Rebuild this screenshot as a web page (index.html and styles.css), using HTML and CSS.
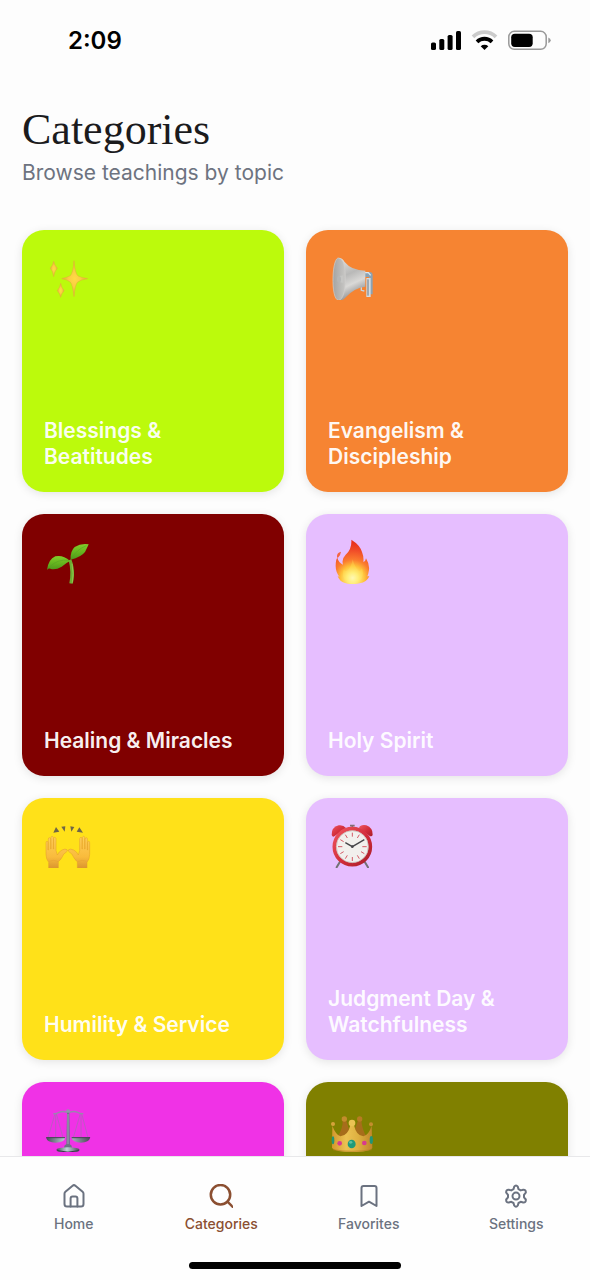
FILE: index.html
```html
<!DOCTYPE html>
<html lang="en">
<head>
<meta charset="utf-8">
<meta name="viewport" content="width=device-width, initial-scale=1">
<title>Categories</title>
<link rel="stylesheet" href="styles.css">
</head>
<body>
<div class="app">
  <div class="status">
    <span class="time">2:09</span>
    <svg class="status-icons" viewBox="0 0 120 22" aria-hidden="true">
      <rect x="0" y="12.500" width="5" height="7.500" rx="1.600"/>
      <rect x="8.300" y="9" width="5" height="11" rx="1.600"/>
      <rect x="16.600" y="5" width="5" height="15" rx="1.600"/>
      <rect x="25" y="1" width="5" height="19" rx="1.600"/>
      <path d="M42 6.800a16.500 16.500 0 0 1 23 0" fill="none" stroke="#cbcbcb" stroke-width="3.800"/>
      <path d="M46 11.800a10.800 10.800 0 0 1 15 0" fill="none" stroke="#000" stroke-width="3.800"/>
      <path d="M49.700 16.200a5.600 5.600 0 0 1 7.600 0L53.500 20z"/>
      <rect x="77.800" y="1.300" width="37.400" height="18" rx="5.500" fill="none" stroke="#999" stroke-width="1.500"/>
      <rect x="80.200" y="3.700" width="21.500" height="13.200" rx="3.600"/>
      <path d="M117.300 7.400q2.400.8 2.400 2.900t-2.400 2.900z" fill="#999"/>
    </svg>
  </div>

  <main class="content">
    <header class="head">
      <h1>Categories</h1>
      <p>Browse teachings by topic</p>
    </header>

    <div class="grid">
      <button class="card lime">
        <svg viewBox="27 18 144 144" aria-hidden="true">
          <defs><radialGradient id="star"><stop offset="0" stop-color="#ffda45"/><stop offset=".45" stop-color="#fbcd42"/><stop offset="1" stop-color="#dfad36"/></radialGradient></defs>
          <g fill="url(#star)" stroke="#e5ad3b" stroke-width="1.500">
            <path d="M117 44Q120 83 129 90Q138 95 158 98Q136 101 128 108Q120 115 117 152Q113 115 106 108Q98 101 80 98Q98 94 106 89Q114 82 117 44z"/>
            <path d="M56 46Q58 58 67 67Q58 75 56 92Q54 75 46 67Q54 58 56 46z"/>
            <path d="M77 112Q79 126 87 134Q79 142 77 154Q75 142 67 134Q75 126 77 112z"/>
          </g>
        </svg>
        <span>Blessings &amp; Beatitudes</span>
      </button>

      <button class="card orange">
        <svg viewBox="24 18 144 144" aria-hidden="true">
          <defs>
            <linearGradient id="horn" x1="0" y1="0" x2=".3" y2="1"><stop offset="0" stop-color="#e6e5e3"/><stop offset=".45" stop-color="#b9b9b8"/><stop offset=".7" stop-color="#dad9d7"/><stop offset="1" stop-color="#8d8e90"/></linearGradient>
            <linearGradient id="bell"><stop offset="0" stop-color="#a4a4a3"/><stop offset="1" stop-color="#c8c7c5"/></linearGradient>
          </defs>
          <path d="M126 78h22q10 0 10 10v57h-11V93h-21z" fill="#8ba3b4"/>
          <path d="M128 80h17l7 8" fill="none" stroke="#dde7ed" stroke-width="4"/>
          <path d="M139 96h13v57h-13z" fill="#d4dce2"/>
          <path d="M144 100v49" stroke="#657783" stroke-width="3"/>
          <path d="M132 116l-8 3v14l9 2" fill="none" stroke="#c9d4dd" stroke-width="4"/>
          <path d="M56 36Q67 35 74 48Q95 74 136 74V122Q104 125 78 153Q67 167 55 162z" fill="url(#horn)"/>
          <path d="M56 36C71 38 76 63 76 99S69 161 56 163C43 162 38 130 39 94S47 35 56 36z" fill="url(#bell)" stroke="#d0cfcd" stroke-width="2"/>
          <path d="M56 91l14-3v23l-13-3z" fill="#c6c6c4"/>
          <ellipse cx="57" cy="100" rx="6" ry="10" fill="#b5b6b6"/>
        </svg>
        <span>Evangelism &amp; Discipleship</span>
      </button>

      <button class="card maroon">
        <svg viewBox="27 18 144 144" aria-hidden="true">
          <defs><linearGradient id="leaf" x1="0" y1="0" x2="0" y2="1"><stop offset="0" stop-color="#82ce2a"/><stop offset=".55" stop-color="#64b31f"/><stop offset="1" stop-color="#4e951a"/></linearGradient></defs>
          <path d="M101 91L109 88Q118 111 117 137Q116 153 113 161L103 160Q110 126 101 91z" fill="#6bad32"/>
          <path d="M111 101q6 31 1 57" fill="none" stroke="#a5d05b" stroke-width="2"/>
          <path d="M36 120Q40 88 61 79Q84 74 105 93Q93 99 80 110Q61 121 46 116Q40 115 36 120z" fill="url(#leaf)"/>
          <path d="M107 89Q105 64 119 51Q138 39 161 43Q156 54 150 66Q139 81 107 89z" fill="url(#leaf)"/>
          <path d="M42 112Q68 86 102 91M110 85Q124 59 154 47" fill="none" stroke="#559e24" stroke-width="1.500"/>
        </svg>
        <span>Healing &amp; Miracles</span>
      </button>

      <button class="card lilac">
        <svg viewBox="24 18 144 144" aria-hidden="true">
          <defs><radialGradient id="flame" gradientUnits="userSpaceOnUse" cx="98" cy="144" r="105"><stop offset="0" stop-color="#fffbd0"/><stop offset=".16" stop-color="#ffee80"/><stop offset=".34" stop-color="#ffc23a"/><stop offset=".52" stop-color="#fb7c2e"/><stop offset=".8" stop-color="#f04a28"/><stop offset="1" stop-color="#e9321e"/></radialGradient></defs>
          <path d="M94 29Q120 45 126 66Q132 81 130 96Q137 94 138 85Q149 103 147 119Q145 133 142 139L148 139Q140 157 119 160Q96 165 75 159Q58 154 53 138L59 141Q47 127 47 108Q47 89 52 83Q56 98 69 104Q64 87 77 74Q96 58 94 29z" fill="url(#flame)"/>
          <path d="M51 80Q50 68 63 65Q62 74 55 82Q52 86 51 80z" fill="#f46542"/>
          <path d="M98 88Q94 110 84 120Q75 128 72 117Q65 132 72 146Q81 158 100 158Q120 157 126 143Q132 128 126 115Q121 126 116 122Q105 114 98 88z" fill="#fff05f" opacity=".25"/>
        </svg>
        <span>Holy Spirit</span>
      </button>

      <button class="card yellow">
        <svg viewBox="27 15 144 144" aria-hidden="true">
          <defs>
            <linearGradient id="skin" x1="0" y1="0" x2="0" y2="1"><stop offset="0" stop-color="#ffd05a"/><stop offset=".65" stop-color="#f9bb3c"/><stop offset="1" stop-color="#db9630"/></linearGradient>
            <path id="hand" d="M41 159V142Q33 132 33 118V83q0-4 3-4t3 4v22h1V72q0-4 3-4t4 4v30h1V68q0-4 3-4t4 4v34h1V71q0-4 3-4t4 4v36l4 13q4-10 14-15q10-5 15-1q4 4-3 8q-8 4-11 13q-4 9-12 15v19z"/>
          </defs>
          <g fill="url(#skin)" stroke="#e29b2d" stroke-width="1.500">
            <use href="#hand"/>
            <use href="#hand" transform="translate(197) scale(-1 1)"/>
          </g>
          <path d="M43 139q13-7 26 1M128 140q13-8 26-1" fill="none" stroke="#e7a335" stroke-width="2"/>
          <g fill="#6f6648"><path d="M63 36l10 14-18 3z"/><path d="M79 35l12-1-2 16z"/><path d="M106 34l12 2-9 14z"/><path d="M133 37l11 16-19-3z"/></g>
        </svg>
        <span>Humility &amp; Service</span>
      </button>

      <button class="card lilac">
        <svg viewBox="24 15 144 144" aria-hidden="true">
          <defs><linearGradient id="red" x1="0" y1="0" x2="1" y2="1"><stop offset="0" stop-color="#ef5660"/><stop offset=".55" stop-color="#d12c3a"/><stop offset="1" stop-color="#a91e29"/></linearGradient></defs>
          <path d="M60 140l-10 17M134 140l10 17" stroke="#737175" stroke-width="6" stroke-linecap="round"/>
          <path d="M97 30v12M90 32h14M70 44l-6-7M125 43l6-7" stroke="#806e73" stroke-width="5"/>
          <path d="M35 60Q34 37 56 31Q70 29 78 39L43 64Q38 67 35 60z" fill="url(#red)"/>
          <path d="M117 39Q121 28 139 31Q159 39 158 59Q156 67 148 62z" fill="url(#red)"/>
          <circle cx="97" cy="95" r="54" fill="#f2f0ed" stroke="url(#red)" stroke-width="11"/>
          <circle cx="97" cy="95" r="48" fill="none" stroke="#beb6b1" stroke-width="2"/>
          <path d="M97 53v12M97 126v12M54 95h13M127 95h13M76 59l6 10M112 121l6 10M61 74l10 6M123 110l10 6M118 59l-6 10M82 121l-6 10M61 116l10-6" stroke="#d45b67" stroke-width="3"/>
          <path d="M76 83l21 12 36-21" fill="none" stroke="#454548" stroke-width="4"/>
          <circle cx="97" cy="95" r="4" fill="#47464a"/>
        </svg>
        <span>Judgment Day &amp; Watchfulness</span>
      </button>

      <button class="card magenta">
        <svg viewBox="27 27 144 144" aria-hidden="true">
          <defs><linearGradient id="steel"><stop offset="0" stop-color="#454956"/><stop offset=".45" stop-color="#bed4d7"/><stop offset="1" stop-color="#4a4554"/></linearGradient></defs>
          <path d="M60 56L39 128M64 56L84 128M62 56V127M136 56L115 128M140 56L159 128M138 56V127" stroke="#a56bb3" stroke-width="2"/>
          <path d="M55 56q9 1 17-4q12-5 24 0h8q12-5 24 0q8 5 17 4" fill="none" stroke="#9a86ad" stroke-width="4"/>
          <circle cx="99" cy="49" r="6" fill="#9295a9"/>
          <path d="M96 53h7l2 99H94z" fill="#72718a"/><path d="M99 57v93" stroke="#b6bfce" stroke-width="2"/>
          <path d="M33 127h58q-3 16-29 16t-29-16zM109 127h57q-4 16-28 16t-29-16z" fill="url(#steel)"/>
          <path d="M34 128h56M110 128h55" stroke="#454252" stroke-width="3"/>
          <path d="M89 151q10-8 20 0l3 10H86z" fill="#6c7385"/>
          <ellipse cx="99" cy="165" rx="35" ry="8" fill="url(#steel)"/><path d="M67 167q32 9 64 0" fill="none" stroke="#39374a" stroke-width="3"/>
        </svg>
      </button>

      <button class="card olive">
        <svg viewBox="24 27 144 144" aria-hidden="true">
          <defs><linearGradient id="gold"><stop offset="0" stop-color="#d3982d"/><stop offset=".35" stop-color="#ecc252"/><stop offset=".65" stop-color="#deb040"/><stop offset="1" stop-color="#c0862a"/></linearGradient></defs>
          <path d="M52 124Q70 101 68 74h10l15 48zM139 124Q125 101 124 74h-9l-18 48z" fill="#a76d1b"/>
          <circle cx="73" cy="72" r="8" fill="#c38c2c"/><circle cx="119" cy="72" r="8" fill="#b77b23"/>
          <path d="M37 92Q47 119 61 124Q84 123 91 91h11Q109 123 130 124Q147 119 155 92L157 159Q148 171 97 171T36 159z" fill="url(#gold)"/>
          <circle cx="96" cy="84" r="10" fill="#ebc353"/><circle cx="39" cy="87" r="6" fill="#d6a23b"/><circle cx="153" cy="88" r="6" fill="#c48d2d"/>
          <path d="M39 164q57 10 116 0" fill="none" stroke="#b77e23" stroke-width="2"/>
          <ellipse cx="95" cy="147" rx="12" ry="13" fill="#209b7a"/><ellipse cx="92" cy="142" rx="5" ry="4" fill="#5dc19f"/>
          <circle cx="59" cy="145" r="7" fill="#d83a8f"/><circle cx="133" cy="144" r="7" fill="#d83a8f"/>
          <ellipse cx="39" cy="136" rx="4" ry="12" fill="#239474"/><ellipse cx="154" cy="135" rx="5" ry="12" fill="#239474"/>
        </svg>
      </button>
    </div>
  </main>

  <nav class="tabs">
    <a href="#home"><svg viewBox="0 0 24 24" aria-hidden="true"><path d="M2.500 9.800Q2.500 8.600 3.400 7.800L10.600 1.700q1.400-1.100 2.800 0l7.200 6.100q.9.800.9 2V20q0 2.500-2.500 2.500H5Q2.500 22.500 2.500 20z"/><path d="M8.600 22.500v-8q0-2 2-2h2.800q2 0 2 2v8"/></svg><span>Home</span></a>
    <a href="#categories" class="active" aria-current="page"><svg viewBox="0 0 24 24" aria-hidden="true"><circle cx="11.500" cy="10.700" r="9.700"/><path d="M18.500 17.700l5 5"/></svg><span>Categories</span></a>
    <a href="#favorites"><svg viewBox="0 0 24 24" aria-hidden="true"><path d="M4.500 4q0-2 2-2h11q2 0 2 2v18L12 17.700 4.500 22z"/></svg><span>Favorites</span></a>
    <a href="#settings"><svg viewBox="0 0 24 24" aria-hidden="true"><path d="M10.200 2.700Q12 .3 13.800 2.700l.7 2.500 2.200 1.200 2.500-.7q2.900-.2 2.600 3l-1.800 2.200v2.400l1.800 2.200q.3 3.200-2.600 3l-2.500-.7-2.200 1.200-.7 2.500q-1.800 2.400-3.600 0l-.7-2.500-2.200-1.200-2.500.7q-2.900.2-2.600-3L4 13.300v-2.400L2.200 8.700q-.3-3.200 2.600-3l2.500.7 2.200-1.200z"/><circle cx="12" cy="12.100" r="3.500"/></svg><span>Settings</span></a>
    <div class="home-bar"></div>
  </nav>
</div>
</body>
</html>
```
FILE: styles.css
```css
* { box-sizing: border-box; }

body {
  margin: 0;
  background: #fdfdfd;
  font-family: Inter, "Liberation Sans", sans-serif;
}

.app {
  display: flex;
  flex-direction: column;
  height: 100vh;
}

.status {
  display: flex;
  align-items: center;
  justify-content: space-between;
  padding: 25px 39px 23px 68px;
}

.time {
  font-size: 24px;
  line-height: 32px;
  font-weight: 600;
  color: #000;
}

.status-icons { width: 120px; height: 22px; }

.content {
  flex: 1;
  min-height: 0;
  overflow-y: auto;
  scrollbar-width: none;
}

.head { padding: 24px 22px 44px; }

h1 {
  margin: 0;
  font: 400 44px/52px "Liberation Serif", serif;
  color: #1b1b1d;
}

.head p {
  margin: 3px 0 0;
  font-size: 21px;
  line-height: 27px;
  color: #6d7380;
}

.grid {
  display: grid;
  grid-template-columns: 1fr 1fr;
  gap: 22px;
  padding: 0 22px 22px;
}

.card {
  display: flex;
  flex-direction: column;
  justify-content: space-between;
  align-items: flex-start;
  aspect-ratio: 1;
  padding: 22px;
  border: 0;
  border-radius: 22px;
  box-shadow: 0 2px 10px rgba(0, 0, 0, .1);
  color: rgba(255, 255, 255, .95);
  font: 600 21px/26px Inter, "Liberation Sans", sans-serif;
  text-align: left;
}

.card svg { width: 48px; height: 48px; }

.lime { background: #bcfa0c; }
.orange { background: #f68432; }
.maroon { background: #800000; }
.lilac { background: #e6beff; }
.yellow { background: #ffe119; }
.magenta { background: #f032e6; }
.olive { background: #808000; }

.tabs {
  display: grid;
  grid-template-columns: repeat(4, 1fr);
  row-gap: 30px;
  padding: 27px 0 11px;
  border-top: 1px solid #e8e8ea;
  background: #fefefe;
}

.tabs a {
  display: flex;
  flex-direction: column;
  align-items: center;
  gap: 8px;
  color: #6b7280;
  font-size: 14px;
  line-height: 16px;
  font-weight: 500;
  text-decoration: none;
}

.tabs svg {
  width: 24px;
  height: 24px;
  fill: none;
  stroke: currentColor;
  stroke-width: 2;
  stroke-linecap: round;
  stroke-linejoin: round;
}

.tabs .active { color: #8b4f31; }
.tabs .active svg { stroke-width: 2.5; }

.home-bar {
  grid-column: 1 / -1;
  justify-self: center;
  width: 36%;
  height: 7px;
  border-radius: 4px;
  background: #000;
}
```
